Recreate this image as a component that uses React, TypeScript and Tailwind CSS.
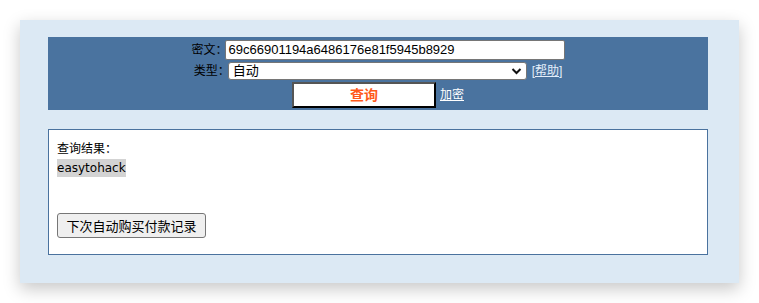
import React from "react";

export default function App() {
  const font = { fontFamily: '"Liberation Sans", Arial, "Noto Sans CJK SC", sans-serif' };
  return (
    <div className="w-[759px] h-[303px] bg-white pt-[20px] pl-[20px]" style={font}>
      <div className="w-[719px] h-[263px] bg-[#dce9f4] shadow-[0_6px_16px_rgba(0,0,0,0.22)] pt-[17px] pl-[28px] pr-[31px]">
        <div className="h-[73px] bg-[#4a739f] pt-[3px] flex flex-col items-center text-[12px] text-black">
          <div className="flex items-center h-[20px]">
            <span className="w-[30px] whitespace-nowrap mr-[3px]">密文：</span>
            <div className="w-[340px] h-[20px] bg-white border border-[#767676] rounded-[2px] px-[3px] text-[13px] leading-[18px]">
              69c66901194a6486176e81f5945b8929
            </div>
          </div>
          <div className="flex items-center h-[19px] mt-[1px]">
            <span className="w-[30px] whitespace-nowrap mr-[4px]">类型：</span>
            <div className="w-[299px] h-[18px] bg-white border border-[#767676] rounded-[3px] pl-[4px] pr-[4px] text-[13px] leading-[16px] flex items-center justify-between">
              <span>自动</span>
              <svg width="11" height="8" viewBox="0 0 11 8">
                <path d="M1.5 2 L5.5 6 L9.5 2" fill="none" stroke="#111" strokeWidth="2" />
              </svg>
            </div>
            <a className="ml-[5px] text-[#e4eefa] underline text-[12px]">[帮助]</a>
          </div>
          <div className="flex items-center mt-[2px]">
            <div className="w-[144px] h-[26px] bg-white border-2 border-t-[#555] border-l-[#555] border-b-black border-r-black flex items-center justify-center text-[14px] font-bold text-[#ff5a1a]">
              查询
            </div>
            <a className="ml-[4px] text-white underline text-[12px]">加密</a>
          </div>
        </div>
        <div className="mt-[19px] h-[126px] bg-white border border-[#4a729e] pl-[8px] pt-[10px] text-[12px] text-black">
          <div className="leading-[16px] mt-[1px]" style={{ fontFamily: '"DejaVu Sans", "Noto Sans CJK SC", sans-serif' }}>查询结果：</div>
          <div className="mt-[2px]">
            <span className="bg-[#d3d3d3] inline-block h-[18px] leading-[18px] text-[12px]" style={{ fontFamily: '"DejaVu Sans", sans-serif' }}>easytohack</span>
          </div>
          <button className="mt-[36px] w-[149px] h-[25px] bg-[#efefef] border border-[#767676] rounded-[3px] text-[13px] text-black flex items-center justify-center" style={{ fontFamily: '"Noto Sans CJK SC", sans-serif' }}>
            下次自动购买付款记录
          </button>
        </div>
      </div>
    </div>
  );
}
